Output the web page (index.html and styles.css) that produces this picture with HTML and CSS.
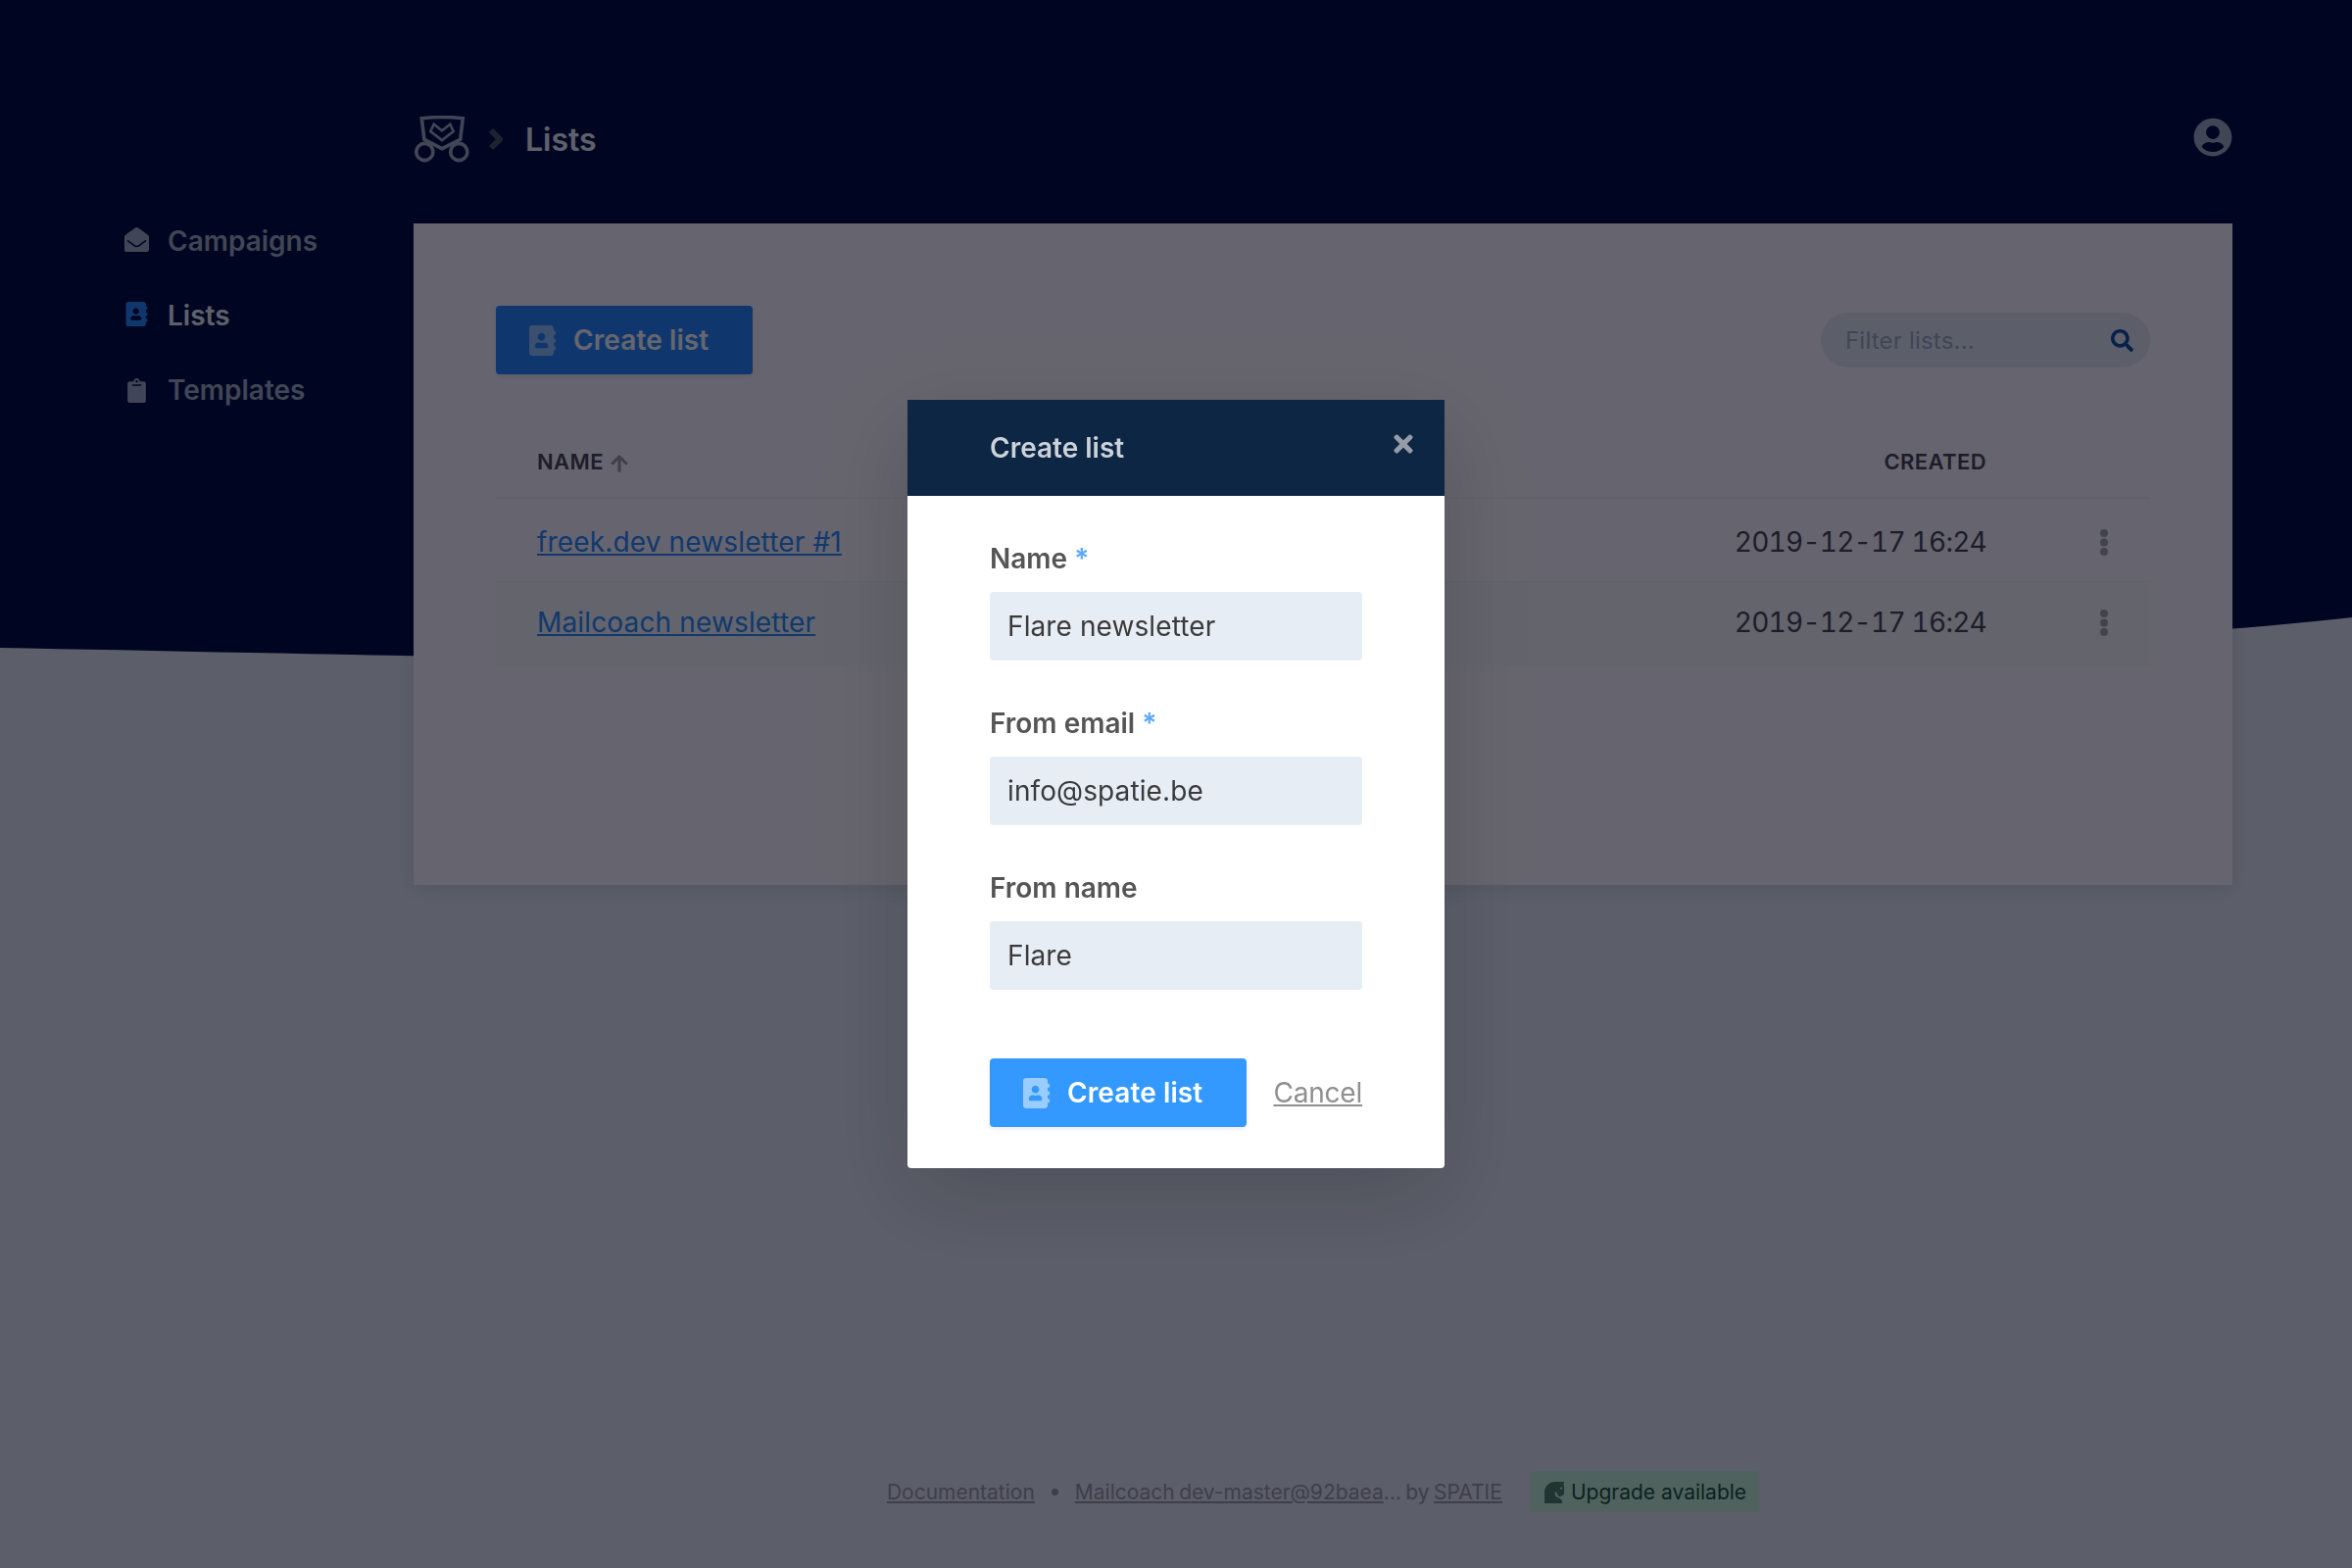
FILE: index.html
```html
<!DOCTYPE html>
<html lang="en">
<head>
    <meta charset="UTF-8">
    <title>Lists | Mailcoach</title>
    <link rel="stylesheet" href="styles.css">
</head>
<body>
    <svg class="icon-defs" aria-hidden="true">
        <symbol id="icon-book" viewBox="0 0 448 512"><path d="M436 160c6.6 0 12-5.4 12-12v-40c0-6.6-5.4-12-12-12h-20V48c0-26.5-21.5-48-48-48H48C21.5 0 0 21.5 0 48v416c0 26.5 21.5 48 48 48h320c26.5 0 48-21.5 48-48v-48h20c6.6 0 12-5.4 12-12v-40c0-6.6-5.4-12-12-12h-20v-64h20c6.6 0 12-5.4 12-12v-40c0-6.6-5.4-12-12-12h-20v-64h20zm-228-32c35.3 0 64 28.7 64 64s-28.7 64-64 64-64-28.7-64-64 28.7-64 64-64zm112 236c0 10.6-10 19.2-22.4 19.2H118.4C106 384 96 375.4 96 364.8v-19.2c0-31.8 30.1-57.6 67.2-57.6h5c12.3 5.1 25.7 8 39.8 8s27.6-2.9 39.8-8h5c37.1 0 67.2 25.8 67.2 57.6v19.2z"/></symbol>
        <symbol id="icon-envelope" viewBox="0 0 512 512"><path d="M512 464c0 26.51-21.49 48-48 48H48c-26.51 0-48-21.49-48-48V200.724a48 48 0 0 1 18.387-37.776c24.913-19.529 45.501-35.365 164.2-121.511C199.412 29.17 232.797-.347 256 .003c23.198-.354 56.596 29.172 73.413 41.433 118.687 86.137 139.303 101.995 164.2 121.512A48 48 0 0 1 512 200.724V464zm-65.666-196.605c-2.563-3.728-7.7-4.595-11.339-1.907-22.845 16.873-55.462 40.705-105.582 77.079-16.825 12.266-50.21 41.781-73.413 41.43-23.211.344-56.559-29.143-73.413-41.43-50.114-36.37-82.734-60.204-105.582-77.079-3.639-2.688-8.776-1.821-11.339 1.907l-9.072 13.196a7.998 7.998 0 0 0 1.839 10.967c22.887 16.899 55.454 40.69 105.303 76.868 20.274 14.781 56.524 47.813 92.264 47.573 35.724.242 71.961-32.771 92.263-47.573 49.85-36.179 82.418-59.97 105.303-76.868a7.998 7.998 0 0 0 1.839-10.967l-9.071-13.196z"/></symbol>
        <symbol id="icon-clipboard" viewBox="0 0 384 512"><path d="M384 112v352c0 26.51-21.49 48-48 48H48c-26.51 0-48-21.49-48-48V112c0-26.51 21.49-48 48-48h80c0-35.29 28.71-64 64-64s64 28.71 64 64h80c26.51 0 48 21.49 48 48zM192 40c-13.255 0-24 10.745-24 24s10.745 24 24 24 24-10.745 24-24-10.745-24-24-24m96 114v-20a6 6 0 0 0-6-6H102a6 6 0 0 0-6 6v20a6 6 0 0 0 6 6h180a6 6 0 0 0 6-6z"/></symbol>
        <symbol id="icon-dots" viewBox="0 0 8 27"><circle cx="4" cy="4" r="4"/><circle cx="4" cy="13.5" r="4"/><circle cx="4" cy="23" r="4"/></symbol>
    </svg>

    <svg class="wave" viewBox="0 0 2400 1600" aria-hidden="true"><path d="M0 0H2400V630C1700 705 600 672 0 661Z"/></svg>

    <div class="layout">
        <nav class="sidebar">
            <a class="nav-item" href="#"><svg class="nav-icon nav-icon-envelope"><use href="#icon-envelope"/></svg>Campaigns</a>
            <a class="nav-item active" href="#"><svg class="nav-icon nav-icon-book"><use href="#icon-book"/></svg>Lists</a>
            <a class="nav-item" href="#"><svg class="nav-icon nav-icon-clipboard"><use href="#icon-clipboard"/></svg>Templates</a>
        </nav>

        <main class="main">
            <header class="topbar">
                <svg class="logo" viewBox="0 0 58 50" aria-hidden="true">
                    <circle cx="11.3" cy="37" r="8.6"/>
                    <circle cx="46.3" cy="37" r="8.6"/>
                    <path d="M8.3 2.7Q29 .3 50.3 2.7L47.7 24.3 29 33.7 10.9 24.3Z"/>
                    <path class="logo-letter" d="M17.3 16L20.7 8.7 29 15.3 37.3 8.7 40.7 16 29 25Z"/>
                </svg>
                <svg class="crumb-chevron" viewBox="0 0 15 24" aria-hidden="true"><path d="M3 3L12 12 3 21"/></svg>
                <h1 class="page-title">Lists</h1>
                <svg class="avatar" viewBox="0 0 496 512" aria-hidden="true"><path d="M248 8C111 8 0 119 0 256s111 248 248 248 248-111 248-248S385 8 248 8zm0 96c48.6 0 88 39.4 88 88s-39.4 88-88 88-88-39.4-88-88 39.4-88 88-88zm0 344c-58.7 0-111.3-26.6-146.5-68.2 18.8-35.4 55.6-59.8 98.5-59.8 2.4 0 4.8.4 7.1 1.1 13 4.2 26.6 6.9 40.9 6.9 14.3 0 28-2.7 40.9-6.9 2.3-.7 4.7-1.1 7.1-1.1 42.9 0 79.7 24.4 98.5 59.8C359.3 421.4 306.7 448 248 448z"/></svg>
            </header>

            <section class="card">
                <div class="toolbar">
                    <button class="button button-dark" type="button"><svg class="button-icon"><use href="#icon-book"/></svg>Create list</button>
                    <div class="search">
                        <input class="search-input" type="text" placeholder="Filter lists...">
                        <svg class="search-icon" viewBox="0 0 512 512" aria-hidden="true"><path d="M505 442.7L405.3 343c-4.5-4.5-10.6-7-17-7H372c27.6-35.3 44-79.7 44-128C416 93.1 322.9 0 208 0S0 93.1 0 208s93.1 208 208 208c48.3 0 92.7-16.4 128-44v16.3c0 6.4 2.5 12.5 7 17l99.7 99.7c9.4 9.4 24.6 9.4 33.9 0l28.3-28.3c9.4-9.4 9.4-24.6.1-34zM208 336c-70.7 0-128-57.2-128-128 0-70.7 57.2-128 128-128 70.7 0 128 57.2 128 128 0 70.7-57.2 128-128 128z"/></svg>
                    </div>
                </div>

                <table class="table">
                    <thead>
                        <tr>
                            <th>Name <svg class="sort-icon" viewBox="0 0 448 512" aria-hidden="true"><path d="M34.9 289.5l-22.2-22.2c-9.4-9.4-9.4-24.6 0-33.9L207 39c9.4-9.4 24.6-9.4 33.9 0l194.3 194.3c9.4 9.4 9.4 24.6 0 33.9L413 289.4c-9.5 9.5-25 9.3-34.3-.4L264 168.6V456c0 13.3-10.7 24-24 24h-32c-13.3 0-24-10.7-24-24V168.6L69.2 289.1c-9.3 9.8-24.8 10-34.3.4z"/></svg></th>
                            <th class="col-created">Created</th>
                            <th class="col-actions"></th>
                        </tr>
                    </thead>
                    <tbody>
                        <tr class="row-first">
                            <td><a href="#">freek.dev newsletter #1</a></td>
                            <td class="col-created">2019-12-17 16:24</td>
                            <td class="col-actions"><svg class="dots"><use href="#icon-dots"/></svg></td>
                        </tr>
                        <tr class="row-striped">
                            <td><a href="#">Mailcoach newsletter</a></td>
                            <td class="col-created">2019-12-17 16:24</td>
                            <td class="col-actions"><svg class="dots"><use href="#icon-dots"/></svg></td>
                        </tr>
                    </tbody>
                </table>
            </section>

            <footer class="footer">
                <a href="#">Documentation</a>
                <span class="footer-dot"></span>
                <span class="footer-version"><a href="#">Mailcoach dev-master@92baea</a>… by <a href="#">SPATIE</a></span>
                <a class="upgrade" href="#">
                    <svg class="upgrade-icon" viewBox="0 30 352 386" aria-hidden="true"><path d="M19 272.47l40.63 18.06a32 32 0 0 0 24.88.47l12.78-5.12a32 32 0 0 0 18.76-20.5l9.22-30.65a24 24 0 0 1 12.55-15.65L159.94 208v50.33a48 48 0 0 1-26.53 42.94l-57.22 28.65A80 80 0 0 0 32 401.48V416h319.86V224c0-106-85.92-192-191.92-192H12A12 12 0 0 0 0 44a16.9 16.9 0 0 0 1.79 7.58L16 80l-9 9a24 24 0 0 0-7 17v137.21a32 32 0 0 0 19 29.26zM52 128a20 20 0 1 1-20 20 20 20 0 0 1 20-20z"/></svg>
                    Upgrade available
                </a>
            </footer>
        </main>
    </div>

    <div class="overlay">
        <div class="modal">
            <div class="modal-header">
                <h2 class="modal-title">Create list</h2>
                <svg class="modal-close" viewBox="0 0 352 512" aria-hidden="true"><path d="M242.72 256l100.07-100.07c12.28-12.28 12.28-32.19 0-44.48l-22.24-22.24c-12.28-12.28-32.19-12.28-44.48 0L176 189.28 75.93 89.21c-12.28-12.28-32.19-12.28-44.48 0L9.21 111.45c-12.28 12.28-12.28 32.19 0 44.48L109.28 256 9.21 356.07c-12.28 12.28-12.28 32.19 0 44.48l22.24 22.24c12.28 12.28 32.2 12.28 44.48 0L176 322.72l100.07 100.07c12.28 12.28 32.2 12.28 44.48 0l22.24-22.24c12.28-12.28 12.28-32.19 0-44.48L242.72 256z"/></svg>
            </div>
            <form class="modal-body">
                <div class="field">
                    <label class="label">Name <span class="required">*</span></label>
                    <input class="input" type="text" value="Flare newsletter">
                </div>
                <div class="field">
                    <label class="label">From email <span class="required">*</span></label>
                    <input class="input" type="text" value="info@spatie.be">
                </div>
                <div class="field">
                    <label class="label">From name</label>
                    <input class="input" type="text" value="Flare">
                </div>
                <div class="modal-actions">
                    <button class="button" type="button"><svg class="button-icon"><use href="#icon-book"/></svg>Create list</button>
                    <a class="cancel" href="#">Cancel</a>
                </div>
            </form>
        </div>
    </div>
</body>
</html>
```

FILE: styles.css
```css
* {
    margin: 0;
    padding: 0;
    box-sizing: border-box;
}
body {
    position: relative;
    height: 1600px;
    overflow: hidden;
    font-family: Inter, "Liberation Sans", sans-serif;
    font-size: 28px;
    background-color: #e6ebf5;
    color: #4a4a55;
}
a {
    color: inherit;
}
.icon-defs {
    display: none;
}
.wave {
    position: absolute;
    top: 0;
    left: 0;
    width: 2400px;
    height: 1600px;
    fill: #001141;
}
.layout {
    position: relative;
    display: grid;
    grid-template-columns: 422px 1856px;
    height: 1600px;
}

/* sidebar */
.sidebar {
    padding: 208px 0 0 127px;
}
.nav-item {
    display: flex;
    align-items: center;
    height: 76px;
    font-weight: 600;
    color: #a0aec0;
    text-decoration: none;
}
.nav-item.active {
    color: #edf0f5;
}
.nav-icon {
    width: 25px;
    height: 25px;
    margin-right: 19px;
    fill: #a0aec0;
}
.nav-icon-envelope {
    margin-top: -4px;
}
.active .nav-icon {
    fill: #2a8afc;
    margin-top: -4px;
}

/* top bar */
.main {
    display: flex;
    flex-direction: column;
}
.topbar {
    display: flex;
    align-items: center;
    height: 228px;
    padding-top: 56px;
}
.logo {
    width: 58px;
    height: 50px;
    margin-top: 2px;
    fill: none;
    stroke: #a0aec0;
    stroke-width: 3.6;
}
.logo-letter {
    stroke-width: 2.6;
}
.crumb-chevron {
    width: 15px;
    height: 24px;
    margin-left: 18px;
    fill: none;
    stroke: #4a5568;
    stroke-width: 6;
}
.page-title {
    margin-left: 23px;
    font-size: 32px;
    font-weight: 600;
    color: #edf0f5;
}
.avatar {
    width: 40px;
    height: 40px;
    margin: -4px 0 0 auto;
    fill: #a0aec0;
}

/* card */
.card {
    height: 675px;
    padding: 84px 84px 0;
    background-color: #fefbff;
    box-shadow: 0 4px 20px rgba(0,0,0,0.1);
}
.toolbar {
    display: flex;
    justify-content: space-between;
    align-items: center;
}
.button {
    display: flex;
    align-items: center;
    height: 70px;
    padding: 0 45px 0 34px;
    border: none;
    border-radius: 4px;
    font-family: inherit;
    font-size: 28px;
    font-weight: 600;
    letter-spacing: 0.1px;
    color: white;
    background-color: #3399ff;
    box-shadow: 0 2px 4px rgba(0,0,0,0.08);
}
.button-dark {
    background-color: #2a8afc;
}
.button-icon {
    width: 27px;
    height: 31px;
    margin-right: 18px;
    fill: rgba(255,255,255,0.5);
}
.search {
    display: flex;
    align-items: center;
    width: 336px;
    height: 56px;
    padding: 0 17px 0 25px;
    border-radius: 28px;
    background-color: #e6ebf5;
}
.search-input {
    flex: 1;
    min-width: 0;
    border: none;
    outline: none;
    background: transparent;
    font-family: inherit;
    font-size: 24px;
    letter-spacing: 0.2px;
}
.search-input::placeholder {
    color: #a0aec0;
    opacity: 1;
}
.search-icon {
    width: 23px;
    height: 23px;
    fill: #10509f;
}

/* table */
.table {
    width: 100%;
    border-collapse: collapse;
    table-layout: fixed;
}
.table th {
    height: 126px;
    padding: 0 0 22px 42px;
    border-bottom: 2px solid #f3f4f7;
    vertical-align: bottom;
    text-align: left;
    font-size: 22px;
    line-height: 28px;
    font-weight: 600;
    letter-spacing: 0.4px;
    text-transform: uppercase;
}
.table td {
    height: 84px;
    padding-left: 42px;
    font-size: 28px;
    letter-spacing: 0.15px;
    border-bottom: 1px solid #f3f4f7;
}
.table .row-first td {
    height: 85px;
    padding-top: 5px;
}
.row-striped {
    background-color: #f8f9fb;
}
.table a {
    color: #2b8ffd;
}
.table .col-created {
    width: 600px;
    padding-left: 0;
    text-align: right;
}
.table td.col-created {
    font-variant-numeric: tabular-nums;
    letter-spacing: -0.75px;
}
.table .col-actions {
    width: 167px;
    padding-left: 116px;
}
.sort-icon {
    width: 20px;
    height: 20px;
    margin-left: 0;
    vertical-align: -4px;
    fill: #a0a0a8;
}
.dots {
    display: block;
    width: 8px;
    height: 27px;
    fill: #a8a8b0;
}

/* footer */
.footer {
    display: flex;
    justify-content: center;
    align-items: center;
    margin-top: auto;
    margin-bottom: 57px;
    font-size: 21px;
    color: #9e9ba8;
}
.footer-dot {
    width: 7px;
    height: 7px;
    margin: 0 17px;
    border-radius: 50%;
    background-color: #9e9ba8;
}
.footer-version {
    word-spacing: -1.5px;
}
.upgrade {
    display: flex;
    align-items: center;
    height: 42px;
    margin-left: 29px;
    padding: 0 13px;
    border-radius: 4px;
    background-color: #c6f6d5;
    color: #22543d;
    text-decoration: none;
}
.upgrade-icon {
    width: 22px;
    height: 22px;
    margin: 2px 6px 0 0;
    fill: #22543d;
    opacity: 0.7;
    transform: scaleX(-1);
}

/* modal */
.overlay {
    position: fixed;
    top: 0;
    right: 0;
    bottom: 0;
    left: 0;
    display: flex;
    justify-content: center;
    align-items: center;
    background-color: rgba(0,0,13,0.6);
}
.modal {
    width: 548px;
    border-radius: 0 0 4px 4px;
    background-color: white;
    box-shadow: 0 30px 90px rgba(0,0,0,0.16);
    overflow: hidden;
}
.modal-header {
    display: flex;
    justify-content: space-between;
    align-items: center;
    height: 98px;
    padding: 0 32px 0 84px;
    background-color: #0d2644;
}
.modal-title {
    font-size: 28px;
    font-weight: 600;
    color: #ccd2d9;
}
.modal-close {
    width: 20px;
    height: 28px;
    margin-bottom: 8px;
    fill: #959ca8;
}
.modal-body {
    padding: 44px 84px 42px;
}
.field {
    margin-bottom: 44px;
}
.label {
    display: block;
    margin-bottom: 14px;
    line-height: 40px;
    font-weight: 600;
    color: #555;
}
.required {
    color: #5aa9ff;
}
.input {
    display: block;
    width: 100%;
    height: 70px;
    padding: 0 18px;
    border: none;
    border-radius: 4px;
    outline: none;
    font-family: inherit;
    font-size: 28px;
    letter-spacing: 0.1px;
    color: #3a3a3a;
    background-color: #e7edf5;
}
.modal-actions {
    display: flex;
    justify-content: space-between;
    align-items: center;
    margin-top: 70px;
}
.cancel {
    font-size: 28px;
    letter-spacing: -0.2px;
    color: #8f8f8f;
}
```
